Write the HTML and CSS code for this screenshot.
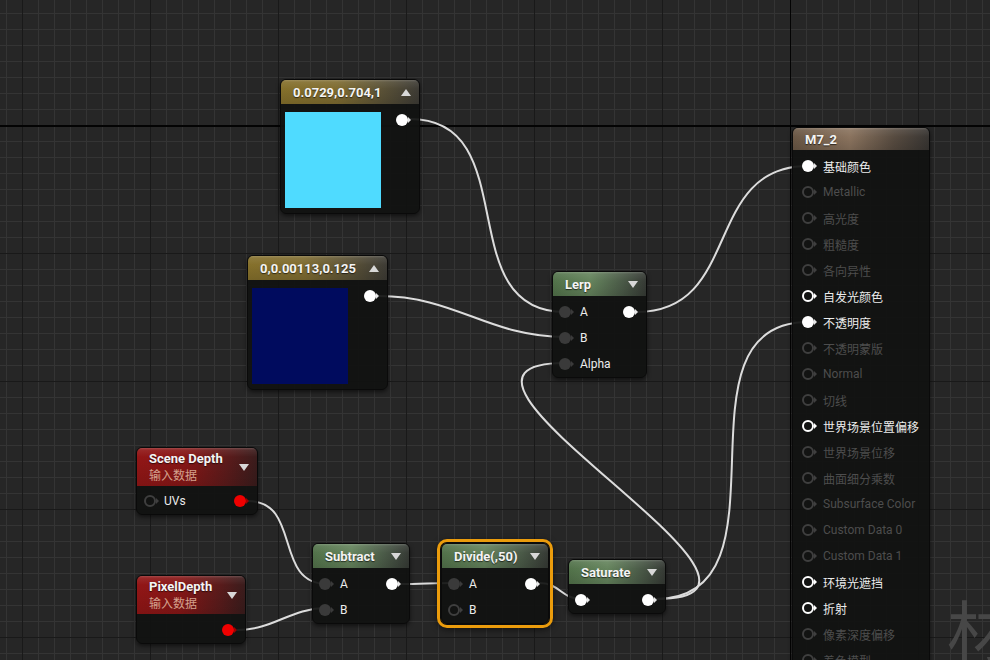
FILE: index.html
```html
<!DOCTYPE html>
<html>
<head>
<meta charset="utf-8">
<link rel="stylesheet" href="styles.css">
</head>
<body>
<div class="graph">
  <svg class="wires" width="990" height="660" viewBox="0 0 990 660">
    <path d="M410 119 C526 119 449 312 565 312"/>
    <path d="M379 296 C455 296 489 337 565 337"/>
    <path d="M637 312 C743 312 702 166 808 166"/>
    <path d="M656 599 C836 599 385 363 565 363"/>
    <path d="M656 599 C799 599 665 322 808 322"/>
    <path d="M248 501 C302 501 273 584 327 584"/>
    <path d="M237 630 C274 630 290 608 327 608"/>
    <path d="M401 584 C419 584 435 583 453 583"/>
    <path d="M540 583 C559 583 562 599 581 599"/>
  </svg>

  <div class="node n-cyan">
    <div class="hdr gold"><span class="title">0.0729,0.704,1</span><i class="tri up"></i></div>
    <div class="cbody">
      <div class="swatch sw-cyan"></div>
      <span class="pin on"></span>
    </div>
  </div>

  <div class="node n-blue">
    <div class="hdr gold"><span class="title">0,0.00113,0.125</span><i class="tri up"></i></div>
    <div class="cbody">
      <div class="swatch sw-blue"></div>
      <span class="pin on"></span>
    </div>
  </div>

  <div class="node n-lerp">
    <div class="hdr green"><span class="title">Lerp</span><i class="tri down"></i></div>
    <div class="body">
      <div class="row"><span class="pin dark"></span><span class="lbl">A</span><span class="pin on out"></span></div>
      <div class="row"><span class="pin dark"></span><span class="lbl">B</span></div>
      <div class="row"><span class="pin dark"></span><span class="lbl">Alpha</span></div>
    </div>
  </div>

  <div class="node n-scene">
    <div class="hdr red tall">
      <div class="titles"><span class="title">Scene Depth</span><span class="sub">输入数据</span></div>
      <i class="tri down"></i>
    </div>
    <div class="body">
      <div class="row"><span class="pin ring dim"></span><span class="lbl">UVs</span><span class="pin red-pin out"></span></div>
    </div>
  </div>

  <div class="node n-pixel">
    <div class="hdr red tall">
      <div class="titles"><span class="title">PixelDepth</span><span class="sub">输入数据</span></div>
      <i class="tri down"></i>
    </div>
    <div class="body">
      <div class="row"><span class="pin red-pin out"></span></div>
    </div>
  </div>

  <div class="node n-sub">
    <div class="hdr green"><span class="title">Subtract</span><i class="tri down"></i></div>
    <div class="body">
      <div class="row"><span class="pin dark"></span><span class="lbl">A</span><span class="pin on out"></span></div>
      <div class="row"><span class="pin dark"></span><span class="lbl">B</span></div>
    </div>
  </div>

  <div class="node n-div selected">
    <div class="hdr green"><span class="title">Divide(,50)</span><i class="tri down"></i></div>
    <div class="body">
      <div class="row"><span class="pin dark"></span><span class="lbl">A</span><span class="pin on out"></span></div>
      <div class="row"><span class="pin ring dim"></span><span class="lbl">B</span></div>
    </div>
  </div>

  <div class="node n-sat">
    <div class="hdr green"><span class="title">Saturate</span><i class="tri down"></i></div>
    <div class="body">
      <div class="row"><span class="pin on"></span><span class="pin on out"></span></div>
    </div>
  </div>

  <div class="node n-m7">
    <div class="hdr brown"><span class="title">M7_2</span></div>
    <div class="body">
      <div class="row"><span class="pin on"></span><span class="lbl">基础颜色</span></div>
      <div class="row off"><span class="pin ring dim"></span><span class="lbl">Metallic</span></div>
      <div class="row off"><span class="pin ring dim"></span><span class="lbl">高光度</span></div>
      <div class="row off"><span class="pin ring dim"></span><span class="lbl">粗糙度</span></div>
      <div class="row off"><span class="pin ring dim"></span><span class="lbl">各向异性</span></div>
      <div class="row"><span class="pin ring"></span><span class="lbl">自发光颜色</span></div>
      <div class="row"><span class="pin on"></span><span class="lbl">不透明度</span></div>
      <div class="row off"><span class="pin ring dim"></span><span class="lbl">不透明蒙版</span></div>
      <div class="row off"><span class="pin ring dim"></span><span class="lbl">Normal</span></div>
      <div class="row off"><span class="pin ring dim"></span><span class="lbl">切线</span></div>
      <div class="row"><span class="pin ring"></span><span class="lbl">世界场景位置偏移</span></div>
      <div class="row off"><span class="pin ring dim"></span><span class="lbl">世界场景位移</span></div>
      <div class="row off"><span class="pin ring dim"></span><span class="lbl">曲面细分乘数</span></div>
      <div class="row off"><span class="pin ring dim"></span><span class="lbl">Subsurface Color</span></div>
      <div class="row off"><span class="pin ring dim"></span><span class="lbl">Custom Data 0</span></div>
      <div class="row off"><span class="pin ring dim"></span><span class="lbl">Custom Data 1</span></div>
      <div class="row"><span class="pin ring"></span><span class="lbl">环境光遮挡</span></div>
      <div class="row"><span class="pin ring"></span><span class="lbl">折射</span></div>
      <div class="row off"><span class="pin ring dim"></span><span class="lbl">像素深度偏移</span></div>
      <div class="row off"><span class="pin ring dim"></span><span class="lbl">着色模型</span></div>
    </div>
  </div>

  <span class="watermark">材质</span>
</div>
</body>
</html>
```

FILE: styles.css
```css
html, body {
  margin: 0;
  padding: 0;
  background: #262626;
}

.graph {
  position: relative;
  width: 990px;
  height: 660px;
  overflow: hidden;
  font-family: Roboto, "Noto Sans CJK SC", sans-serif;
  background-color: #262626;
  background-image:
    linear-gradient(#030303, #030303),
    linear-gradient(#030303, #030303),
    linear-gradient(to right, #191919 1px, transparent 1px),
    linear-gradient(to bottom, #191919 1px, transparent 1px),
    linear-gradient(to right, #343434 1px, transparent 1px),
    linear-gradient(to bottom, #343434 1px, transparent 1px);
  background-size: 1px 100%, 100% 2px, 128px 128px, 128px 128px, 16px 16px, 16px 16px;
  background-position: 790px 0, 0 125px, 22px 0, 0 125px, 6px 0, 0 13px;
  background-repeat: no-repeat, no-repeat, repeat, repeat, repeat, repeat;
}

.wires {
  position: absolute;
  left: 0;
  top: 0;
}

.wires path {
  fill: none;
  stroke: #dcdcdc;
  stroke-width: 2;
}

.watermark {
  position: absolute;
  left: 947px;
  top: 594px;
  font-family: "Noto Sans CJK SC", sans-serif;
  font-size: 66px;
  line-height: 1;
  color: #474747;
  white-space: nowrap;
}

.node {
  position: absolute;
  box-sizing: border-box;
  border: 1px solid #0a0a0a;
  border-radius: 6px;
  background: rgba(17, 18, 17, 0.93);
  box-shadow: 0 2px 4px rgba(0, 0, 0, 0.55);
  color: #f2f2f2;
}

.n-cyan { left: 280px; top: 79px; width: 140px; }
.n-blue { left: 247px; top: 255px; width: 141px; }
.n-lerp { left: 552px; top: 271px; width: 95px; }
.n-scene { left: 136px; top: 447px; width: 122px; }
.n-pixel { left: 136px; top: 575px; width: 110px; }
.n-sub { left: 312px; top: 543px; width: 98px; }
.n-div { left: 441px; top: 543px; width: 108px; }
.n-sat { left: 568px; top: 559px; width: 98px; }
.n-m7 { left: 792px; top: 127px; width: 138px; height: 560px; }

.node.selected {
  box-shadow: 0 0 0 1px #0c0c0c, 0 0 0 4px #eb9c0c, 0 2px 6px 4px rgba(0,0,0,0.5);
}

.hdr {
  height: 24px;
  box-sizing: border-box;
  padding: 0 8px 0 12px;
  display: flex;
  align-items: center;
  justify-content: space-between;
  border-radius: 5px 5px 0 0;
  position: relative;
}

.hdr::before {
  content: "";
  position: absolute;
  inset: 0;
  border-radius: 5px 5px 0 0;
  background: linear-gradient(to bottom, rgba(255,255,255,0.22) 0, rgba(255,255,255,0.08) 2px, rgba(255,255,255,0) 9px, rgba(0,0,0,0.12) 100%);
}

.n-m7 .hdr { height: 22px; }

.hdr.tall {
  height: 38px;
}

.gold { background: linear-gradient(to right, #85702b 0%, #7f6c31 40%, #5c5337 72%, #3d3b35 100%); }
.green { background: linear-gradient(to right, #52724a 0%, #65845d 40%, #4b5b48 74%, #363a35 100%); }
.red { background: linear-gradient(to right, #921616 0%, #871717 40%, #5c1b1b 75%, #3a1c1c 100%); }
.brown { background: linear-gradient(to right, #6a5745 0%, #8a735e 42%, #574b40 74%, #383532 100%); }

.title {
  position: relative;
  font-weight: 700;
  font-size: 13px;
  color: #f4f4f4;
  text-shadow: 0 1px 1px rgba(0,0,0,0.6);
  white-space: nowrap;
}

.titles {
  position: relative;
  display: flex;
  flex-direction: column;
  gap: 1px;
  margin-top: 1px;
}

.sub {
  font-size: 12px;
  color: #d4a08c;
  line-height: 16px;
}

.titles .title { line-height: 16px; }

.tri {
  position: relative;
  width: 0;
  height: 0;
  border-left: 5px solid transparent;
  border-right: 5px solid transparent;
}

.tri.down { border-top: 7px solid #d8d8d8; }
.tri.up { border-bottom: 7px solid #d8d8d8; }

.cbody {
  display: flex;
  align-items: flex-start;
  padding: 8px 11px 5px 4px;
}

.swatch {
  width: 96px;
  height: 96px;
  flex: none;
}

.sw-cyan { background: #4fdbff; }
.sw-blue { background: #000b5e; }

.cbody .pin {
  margin-left: auto;
  margin-top: 2px;
}

.body {
  padding: 3px 0 0;
}

.row {
  height: 26px;
  display: flex;
  align-items: center;
  padding: 0 11px 0 6px;
  font-size: 12px;
  color: #ececec;
  white-space: nowrap;
}

.n-m7 .row { padding-left: 9px; }
.n-scene .row { padding-left: 7px; }
.n-scene .body { padding-top: 2px; }

.lbl {
  margin-left: 9px;
}

.n-scene .lbl { margin-left: 8px; }

.row.off { color: #4d4d4d; }

.pin {
  position: relative;
  box-sizing: border-box;
  width: 12px;
  height: 12px;
  border-radius: 50%;
  flex: none;
  color: #ffffff;
}

.pin::after {
  content: "";
  position: absolute;
  top: 50%;
  left: 100%;
  margin-top: -3px;
  margin-left: 0;
  border-left: 3px solid currentColor;
  border-top: 3px solid transparent;
  border-bottom: 3px solid transparent;
}

.pin.out { margin-left: auto; }

.pin.on { background: #ffffff; color: #e6e6e6; }
.pin.dark { background: #3a3a3a; color: #3a3a3a; }
.pin.red-pin { background: #f00000; color: #a00000; }
.pin.ring { border: 2px solid currentColor; }
.pin.ring::after { margin-left: 2px; }
.pin.ring.dim { color: #3f3f3f; }
```
